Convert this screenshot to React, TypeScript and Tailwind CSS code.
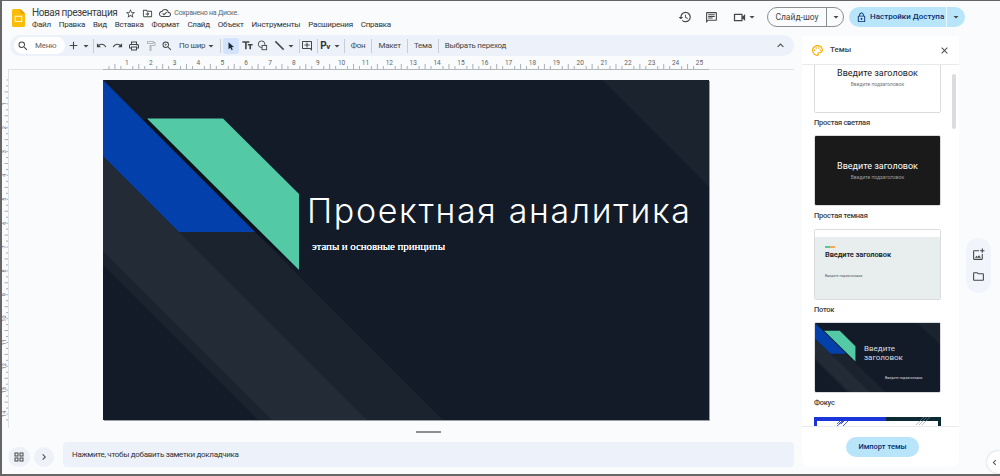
import {
  MdAdd,
  MdArrowDropDown,
  MdChevronLeft,
  MdChevronRight,
  MdClose,
  MdExpandLess,
  MdOutlineAddComment,
  MdOutlineAddPhotoAlternate,
  MdOutlineChat,
  MdOutlineCloudDone,
  MdOutlineDriveFileMove,
  MdOutlineFolder,
  MdOutlineFormatPaint,
  MdOutlineGridView,
  MdOutlineHistory,
  MdOutlineLock,
  MdOutlinePalette,
  MdOutlinePrint,
  MdOutlineStarBorder,
  MdOutlineTextFields,
  MdOutlineVideocam,
  MdOutlineZoomIn,
  MdRedo,
  MdSearch,
  MdUndo,
} from "react-icons/md";

const menuItems = ["Файл", "Правка", "Вид", "Вставка", "Формат", "Слайд", "Объект", "Инструменты", "Расширения", "Справка"];
const CM = 23.86;

function Sep({ className = "" }: { className?: string }) {
  return <div className={`w-px h-[14px] bg-[#c7cdd4] shrink-0 ${className}`} />;
}

function Caret({ className = "" }: { className?: string }) {
  return <MdArrowDropDown className={`shrink-0 text-[#444746] ${className}`} size={12} />;
}

function SlideArt() {
  return (
    <svg viewBox="0 0 606 340" preserveAspectRatio="none" className="block w-full h-full">
      <rect width="606" height="340" fill="#121b27" />
      <polygon points="499,0 606,0 606,107" fill="#1a232e" />
      <polygon points="0,0 340,340 155,340 0,185" fill="#1b232e" />
      <polygon points="0,76 264,340 169,340 0,171" fill="#232b36" />
      <polygon points="40,40 44,38.5 196,190 152,152" fill="#0c131d" />
      <polygon points="0,0 152,152 76,152 0,76" fill="#0340ab" />
      <polygon points="44,38.5 120,38.5 196,114 196,190" fill="#54c9a6" />
    </svg>
  );
}

function HorizontalRuler() {
  const ticks = [];
  for (let i = 0; i <= 100; i++) {
    const x = 101 + (i * CM) / 4;
    if (i % 4 === 0) continue;
    ticks.push(<line key={i} x1={x} x2={x} y1={i % 2 === 0 ? 7 : 9} y2="12" stroke="#8a8f94" strokeWidth="0.7" />);
  }
  const labels = [];
  for (let n = 1; n <= 25; n++) {
    labels.push(
      <text key={n} x={101 + n * CM} y="8" fontSize="6.5" textAnchor="middle" fill="#5f6368" fontFamily="Roboto, sans-serif">
        {n}
      </text>,
    );
  }
  return (
    <svg width="800" height="13" className="block shrink-0">
      <rect x="6" y="12" width="786" height="1.5" fill="#dfe3e8" />
      <rect x="101" y="12" width="606" height="1.5" fill="#b4b8bd" />
      {ticks}
      {labels}
    </svg>
  );
}

function VerticalRuler() {
  const ticks = [];
  for (let i = 0; i <= 57; i++) {
    const y = 10 + (i * CM) / 4;
    ticks.push(<line key={i} x1={i % 4 === 0 ? 4.6 : i % 2 === 0 ? 2.5 : 4} x2="6" y1={y} y2={y} stroke="#8a8f94" strokeWidth="0.7" />);
  }
  const labels = [];
  for (let n = 1; n <= 14; n++) {
    const y = 10 + n * CM;
    labels.push(
      <text key={n} x="4.5" y={y} fontSize="5.5" textAnchor="middle" fill="#5f6368" fontFamily="Roboto, sans-serif" transform={`rotate(-90 4.5 ${y})`}>
        {n}
      </text>,
    );
  }
  return (
    <svg width="7" height="358" className="block shrink-0">
      <rect x="6" y="0" width="1.2" height="358" fill="#dfe3e8" />
      {ticks}
      {labels}
    </svg>
  );
}

function Toolbar() {
  return (
    <div className="mt-px ml-[8px] mr-[8px] h-[21px] rounded-full bg-[#edf2fa] flex items-center text-[#444746] text-[8px] tracking-[-0.25px] shrink-0">
      <div className="ml-[4px] w-[51px] h-[17px] rounded-full bg-white flex items-center shrink-0">
        <MdSearch size={12} className="ml-[3px]" />
        <span className="ml-[6px] text-[#5f6368]">Меню</span>
      </div>
      <MdAdd size={13} className="ml-[2px] shrink-0" />
      <Caret />
      <Sep className="ml-[1px]" />
      <MdUndo size={11} className="ml-[2px] shrink-0" />
      <MdRedo size={11} className="ml-[5px] shrink-0" />
      <MdOutlinePrint size={12} className="ml-[5px] shrink-0" />
      <MdOutlineFormatPaint size={12} className="ml-[5px] shrink-0 text-[#b4b8bb]" />
      <MdOutlineZoomIn size={12} className="ml-[4px] shrink-0" />
      <span className="ml-[6px] whitespace-nowrap">По шир</span>
      <Caret />
      <Sep className="ml-[3px]" />
      <div className="ml-[2px] w-[16px] h-[16px] rounded-[3px] bg-[#d3e3fd] flex items-center justify-center shrink-0">
        <svg viewBox="0 0 12 12" width="10" height="10">
          <path d="M3 1.5 L3 10 L5.2 8 L6.8 11 L8.2 10.3 L6.7 7.4 L9.6 7.2 Z" fill="#1f2a37" />
        </svg>
      </div>
      <MdOutlineTextFields size={13} className="ml-[2px] shrink-0" />
      <svg viewBox="0 0 12 12" width="11" height="11" className="ml-[3px] shrink-0" fill="none" stroke="#444746" strokeWidth="1">
        <circle cx="5" cy="4.6" r="3.6" />
        <rect x="5.5" y="6" width="5" height="4.6" fill="#edf2fa" />
      </svg>
      <svg viewBox="0 0 12 12" width="11" height="11" className="ml-[6px] shrink-0">
        <line x1="1.5" y1="1.5" x2="10.5" y2="10.5" stroke="#444746" strokeWidth="1.6" />
      </svg>
      <Caret />
      <Sep className="ml-[2px]" />
      <MdOutlineAddComment size={12} className="ml-[1px] shrink-0" />
      <Sep className="ml-[4px]" />
      <span className="ml-[2px] text-[10px] font-bold leading-none tracking-[-0.5px] text-[#303335]">
        P<span className="text-[8px]">v</span>
      </span>
      <Caret className="ml-[1px]" />
      <Sep className="ml-[1px]" />
      <span className="ml-[6px] whitespace-nowrap">Фон</span>
      <Sep className="ml-[6px]" />
      <span className="ml-[6px] whitespace-nowrap">Макет</span>
      <Sep className="ml-[6px]" />
      <span className="ml-[6px] whitespace-nowrap">Тема</span>
      <Sep className="ml-[6px]" />
      <span className="ml-[6px] whitespace-nowrap">Выбрать переход</span>
      <MdExpandLess size={13} className="ml-auto mr-[7px] shrink-0" />
    </div>
  );
}

function Header() {
  return (
    <header className="h-[33px] flex items-start shrink-0 text-[#444746]">
      <svg viewBox="0 0 13 18" width="13" height="18" className="ml-[10px] mt-[8px] shrink-0">
        <path d="M1.5 0 H8.5 L13 4.5 V16.5 A1.5 1.5 0 0 1 11.5 18 H1.5 A1.5 1.5 0 0 1 0 16.5 V1.5 A1.5 1.5 0 0 1 1.5 0 Z" fill="#fbbc04" />
        <path d="M8.5 0 L13 4.5 H8.5 Z" fill="#f29900" />
        <rect x="3.2" y="7.3" width="6.6" height="5.2" fill="none" stroke="#fff4cc" strokeWidth="1.1" />
      </svg>
      <div className="ml-[7px] pt-[5px] flex flex-col">
        <div className="flex items-center h-[14px]">
          <span className="text-[10px] tracking-[-0.4px] leading-[14px] text-[#3c4043] whitespace-nowrap">Новая презентация</span>
          <MdOutlineStarBorder size={11} className="ml-[8px]" />
          <MdOutlineDriveFileMove size={11} className="ml-[6px]" />
          <MdOutlineCloudDone size={12} className="ml-[6px]" />
          <span className="ml-[3px] text-[7px] tracking-[-0.25px] text-[#5f6368] whitespace-nowrap">Сохранено на Диске.</span>
        </div>
        <nav className="-mt-px flex gap-[8px] text-[8px] tracking-[-0.25px] leading-[12px] text-[#303335] whitespace-nowrap">
          {menuItems.map((item) => (
            <span key={item}>{item}</span>
          ))}
        </nav>
      </div>
      <div className="ml-auto mr-[35px] mt-[6px] h-[20px] flex items-center">
        <MdOutlineHistory size={14} />
        <MdOutlineChat size={13} className="ml-[13px]" />
        <MdOutlineVideocam size={15} className="ml-[14px]" />
        <Caret className="-ml-[1px]" />
        <div className="ml-[9px] w-[77px] h-[20px] rounded-full border border-[#8b8e8f] flex items-center">
          <span className="w-[58px] text-center text-[8.5px] whitespace-nowrap">Слайд-шоу</span>
          <div className="w-px h-full bg-[#8b8e8f]" />
          <Caret className="ml-[3px]" />
        </div>
        <div className="ml-[5px] w-[116px] h-[20px] rounded-full bg-[#b9e5fb] flex items-center text-[#062e6f]">
          <MdOutlineLock size={11} className="ml-[7px]" />
          <span className="ml-[3px] text-[8px] font-medium whitespace-nowrap">Настройки Доступа</span>
          <div className="ml-auto w-px h-full bg-white/70" />
          <Caret className="mx-[3px] text-[#062e6f]" />
        </div>
      </div>
    </header>
  );
}

function Thumb({ label, thumb }: { label: string; thumb: React.ReactNode }) {
  return (
    <div className="shrink-0">
      <div className="relative w-[127px] h-[71px] rounded-[2px] overflow-hidden border border-[#dadce0]">{thumb}</div>
      <div className="h-[22.4px] pt-[4px] text-[7.5px] tracking-[-0.25px] leading-[12px] font-medium text-[#3c4043] whitespace-nowrap">{label}</div>
    </div>
  );
}

function PlainThumb({ dark }: { dark?: boolean }) {
  return (
    <div className={`h-full flex flex-col items-center pt-[24px] ${dark ? "bg-[#1a1a1a] text-white" : "bg-white text-[#222]"}`}>
      <span className="text-[9px] leading-[13px] whitespace-nowrap">Введите заголовок</span>
      <span className={`text-[5px] leading-[9px] whitespace-nowrap ${dark ? "text-[#9a9a9a]" : "text-[#777]"}`}>Введите подзаголовок</span>
    </div>
  );
}

function ThemesPanel() {
  return (
    <aside className="mt-[2px] w-[157px] h-[431px] rounded-b-lg bg-white flex flex-col overflow-hidden shrink-0">
      <div className="h-[29px] flex items-center border-b border-[#e8eaed] shrink-0 text-[#444746]">
        <MdOutlinePalette size={13} className="ml-[9px] text-[#f9ab00]" />
        <span className="ml-[6px] text-[8px] font-medium text-[#3c4043]">Темы</span>
        <MdClose size={11} className="ml-auto mr-[9px]" />
      </div>
      <div className="relative flex-1 overflow-hidden pl-[12px]">
        <div className="-mt-[23px] flex flex-col">
          <Thumb label="Простая светлая" thumb={<PlainThumb />} />
          <Thumb label="Простая темная" thumb={<PlainThumb dark />} />
          <Thumb
            label="Поток"
            thumb={
              <div className="h-full bg-white pt-[7px]">
                <div className="h-full bg-[#e8eeee] pl-[10px] pt-[9px] text-[#222]">
                  <div className="flex h-[2px] w-[10px]">
                    <div className="flex-1 bg-[#54c9a6]" />
                    <div className="flex-1 bg-[#f4a95a]" />
                  </div>
                  <div className="mt-[1px] text-[7.5px] tracking-[-0.1px] leading-[12px] font-semibold whitespace-nowrap">Введите заголовок</div>
                  <div className="mt-[13px] text-[3.5px] leading-[5px] text-[#555] whitespace-nowrap">Введите подзаголовок</div>
                </div>
              </div>
            }
          />
          <Thumb
            label="Фокус"
            thumb={
              <>
                <SlideArt />
                <div className="absolute left-[49px] top-[22px] text-[8px] leading-[8.5px] text-[#d8dde2]">
                  Введите
                  <br />
                  заголовок
                </div>
                <div className="absolute left-[70px] top-[53px] text-[3.5px] leading-[5px] text-[#d8dde2] whitespace-nowrap">Введите подзаголовок</div>
              </>
            }
          />
          <div className="relative mt-px w-[127px] h-[71px] shrink-0 overflow-hidden">
            <svg viewBox="0 0 127 71" className="block w-full h-full">
              <rect width="127" height="71" fill="#0b2a33" />
              <rect width="72" height="71" fill="#1a35d8" />
              <rect x="3" y="4" width="121" height="64" fill="#fff" />
              <g stroke="#1a35d8" strokeWidth="0.8">
                <line x1="23" y1="7" x2="30" y2="0" />
                <line x1="25" y1="7" x2="32" y2="0" />
                <line x1="27" y1="7" x2="34" y2="0" />
                <line x1="23" y1="9" x2="34" y2="0" />
                <line x1="29" y1="9" x2="38" y2="0" />
              </g>
              <g stroke="#8a9499" strokeWidth="0.6">
                <line x1="102" y1="8" x2="110" y2="0" />
                <line x1="105" y1="8" x2="113" y2="0" />
                <line x1="108" y1="8" x2="116" y2="0" />
              </g>
            </svg>
          </div>
        </div>
        <div className="absolute right-[3px] top-[9px] w-[4px] h-[55px] rounded-full bg-[#dadce0]" />
      </div>
      <div className="h-[41px] border-t border-[#e8eaed] flex items-start justify-center shrink-0 pt-[10px]">
        <div className="ml-[4px] w-[73px] h-[20px] rounded-full bg-[#b9e5fb] flex items-center justify-center text-[7.5px] font-medium text-[#062e6f] whitespace-nowrap">
          Импорт темы
        </div>
      </div>
    </aside>
  );
}

export default function App() {
  return (
    <div className="relative w-[1000px] h-[476px] overflow-hidden bg-[#f9fbfd] border-t border-l-2 border-b-2 border-[#666] flex flex-col font-['Roboto',sans-serif]">
      <Header />
      <div className="flex flex-1 min-h-0">
        <main className="w-[800px] shrink-0 flex flex-col">
          <Toolbar />
          <div className="mt-px">
            <HorizontalRuler />
          </div>
          <div className="flex h-[358px] shrink-0">
            <VerticalRuler />
            <div className="relative ml-[94px] mt-[10px] w-[606px] h-[340px] shrink-0 shadow-[1px_1px_0_#9aa0a6]">
              <SlideArt />
              <div className="absolute left-[204px] top-[110px] text-[34px] leading-[42px] font-light tracking-[1.65px] text-white whitespace-nowrap font-['Inter',sans-serif]">
                Проектная аналитика
              </div>
              <div className="absolute left-[209px] top-[159px] text-[11px] leading-[15px] tracking-[-0.1px] text-white [text-shadow:0_0_0.5px_#fff] whitespace-nowrap font-['Liberation_Serif',serif]">
                этапы и основные принципы
              </div>
            </div>
          </div>
          <div className="mt-[3px] ml-[414px] w-[25px] h-[2px] bg-[#8a8f94] shrink-0" />
          <div className="mt-[9px] flex items-end shrink-0">
            <div className="ml-[6px] w-[22px] h-[20px] rounded-full bg-[#eef2f8] flex items-center justify-center text-[#444746]">
              <MdOutlineGridView size={12} />
            </div>
            <div className="ml-[4px] w-[20px] h-[20px] rounded-full bg-[#eef2f8] flex items-center justify-center text-[#444746]">
              <MdChevronRight size={12} />
            </div>
            <div className="ml-[9px] w-[731px] h-[25px] rounded-[4px] bg-[#edf2fa] flex items-center pl-[9px] text-[8px] tracking-[-0.3px] text-[#303335] whitespace-nowrap">
              Нажмите, чтобы добавить заметки докладчика
            </div>
          </div>
        </main>
        <ThemesPanel />
        <div className="flex-1 flex flex-col items-center">
          <div className="mt-[204px] -ml-[2px] w-[25px] h-[55px] rounded-full bg-[#f1f5fb] flex flex-col items-center justify-center gap-[9px] text-[#444746]">
            <MdOutlineAddPhotoAlternate size={13} />
            <MdOutlineFolder size={13} />
          </div>
        </div>
      </div>
      <div className="absolute left-[985px] top-[450px] w-[22px] h-[22px] rounded-full bg-white shadow-[0_0_2px_#bbb] flex items-center pl-[2px] text-[#444746]">
        <MdChevronLeft size={11} />
      </div>
    </div>
  );
}
